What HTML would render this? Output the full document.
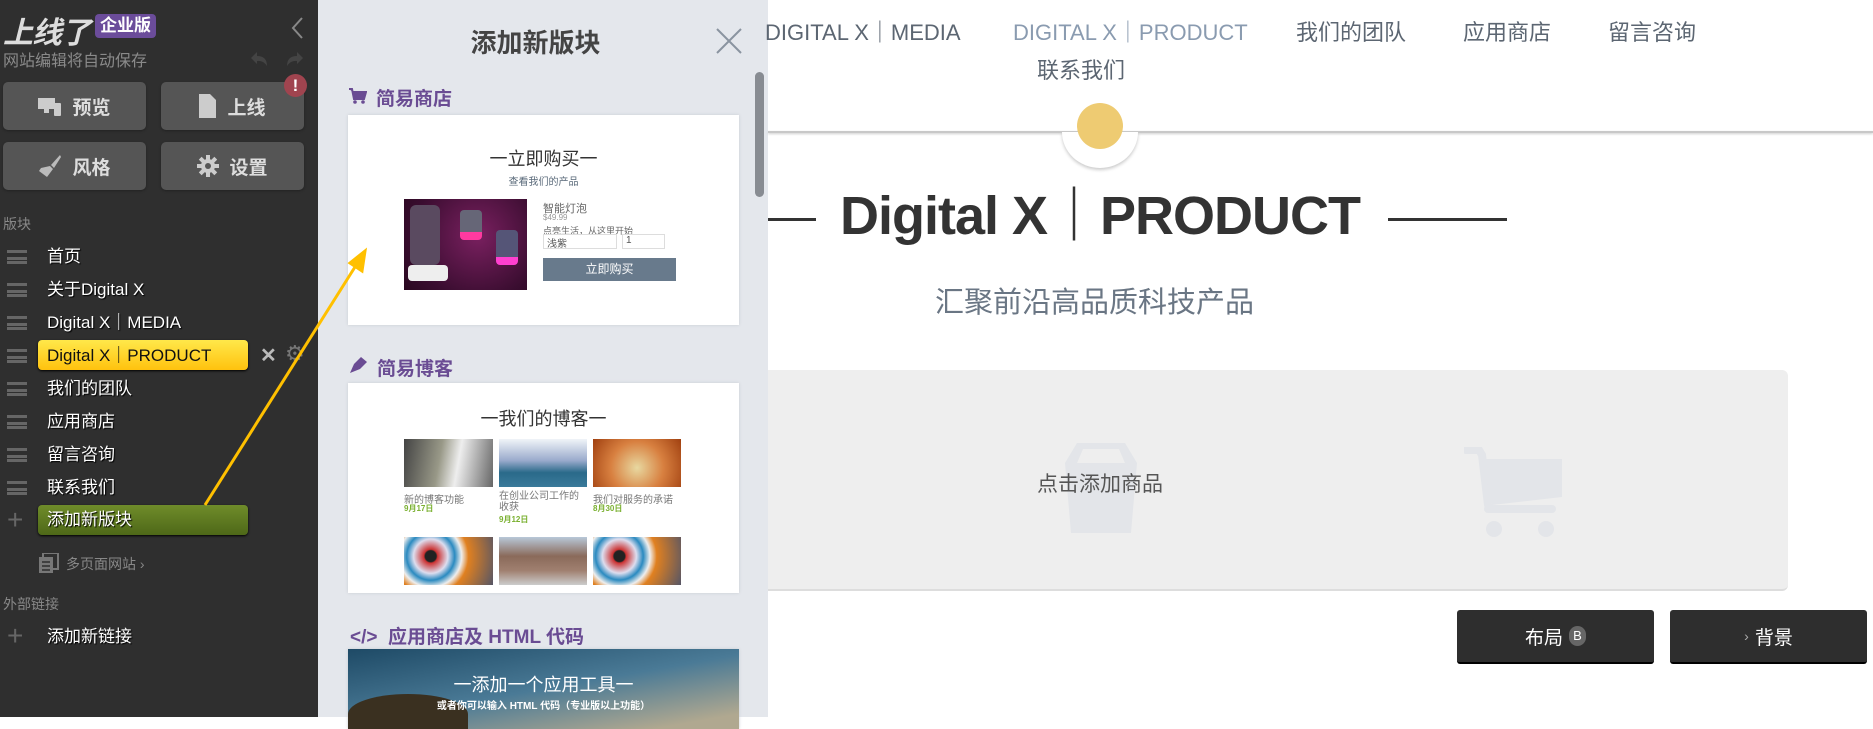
<!DOCTYPE html>
<html><head><meta charset="utf-8">
<style>
*{box-sizing:border-box;margin:0;padding:0}
body{width:1873px;height:717px;overflow:hidden;position:relative;background:#fff;font-family:"Liberation Sans","Noto Sans CJK SC",sans-serif}
.abs{position:absolute}
#side{left:0;top:0;width:318px;height:717px;background:#2f2f2f}
.btn{position:absolute;width:143px;height:48px;background:#555;border-radius:5px;color:#ddd;font-weight:bold;font-size:19px;display:flex;align-items:center;justify-content:center;gap:10px;box-shadow:0 1px 2px #222}
.item{position:absolute;left:47px;color:#fff;font-size:17px;text-shadow:1px 1px 1px #000;line-height:20px}
.ham{position:absolute;left:7px;width:20px;height:14px;border-top:3px solid #666;border-bottom:3px solid #666}
.ham:after{content:"";position:absolute;left:0;right:0;top:3.5px;height:3px;background:#666}
#panel{left:318px;top:0;width:450px;height:717px;background:#e4e7ec}
.card{position:absolute;left:348px;width:391px;background:#fff;box-shadow:0 0 3px #c8ccd2;overflow:hidden}
.h{position:absolute;left:349px;color:#6a4c93;font-weight:bold;font-size:19px}
.nav{position:absolute;top:15px;font-size:22px;color:#5c6672;white-space:nowrap}
</style></head><body>
<div id="side" class="abs">
  <div class="abs" style="left:3px;top:8px;font-size:30px;font-weight:bold;font-style:italic;color:#ddd;letter-spacing:-1px">上线了</div>
  <div class="abs" style="left:95px;top:14px;width:61px;height:24px;background:#6b4c9a;border-radius:4px;color:#fff;font-weight:bold;font-size:17px;text-align:center;line-height:24px">企业版</div>
  <svg class="abs" style="left:290px;top:16px" width="14" height="24"><path d="M12 2 L3 12 L12 22" stroke="#888" stroke-width="2" fill="none"/></svg>
  <div class="abs" style="left:3px;top:47px;font-size:16px;color:#8a8a8a">网站编辑将自动保存</div>
  <svg class="abs" style="left:247px;top:50px" width="60" height="18"><path d="M4 8 L10 2 L10 6 Q20 6 20 16 Q16 10 10 11 L10 14Z" fill="#444"/><path d="M56 8 L50 2 L50 6 Q40 6 40 16 Q44 10 50 11 L50 14Z" fill="#444"/></svg>
  <div class="btn" style="left:3px;top:82px"><svg width="24" height="20"><rect x="0" y="2" width="17" height="11" fill="#ccc"/><rect x="6" y="13" width="5" height="4" fill="#ccc"/><rect x="16" y="7" width="7" height="13" rx="1" fill="#ccc"/></svg>预览</div>
  <div class="btn" style="left:161px;top:82px"><svg width="18" height="24"><path d="M0 0 H11 L17 6 V24 H0Z" fill="#ccc"/></svg>上线</div>
  <div class="abs" style="left:284px;top:74px;width:23px;height:23px;border-radius:50%;background:#a0444f;color:#fff;font-weight:bold;font-size:17px;text-align:center;line-height:23px">!</div>
  <div class="btn" style="left:3px;top:142px"><svg width="24" height="24"><path d="M22 1 L13 11 L16 14 L23 3Z" fill="#bbb"/><path d="M12 12 L15 15 L9 23 L1 17 L3 14 Z" fill="#bbb"/></svg>风格</div>
  <div class="btn" style="left:161px;top:142px"><svg width="22" height="22" viewBox="0 0 22 22"><g fill="#ccc"><circle cx="11" cy="11" r="7"/><rect x="9" y="0" width="4" height="22"/><rect x="0" y="9" width="22" height="4"/><rect x="9" y="0" width="4" height="22" transform="rotate(45 11 11)"/><rect x="9" y="0" width="4" height="22" transform="rotate(-45 11 11)"/></g><circle cx="11" cy="11" r="3" fill="#555"/></svg>设置</div>
  <div class="abs" style="left:3px;top:214px;font-size:14px;color:#888">版块</div>
  <div class="ham" style="top:250px"></div><div class="item" style="top:247px">首页</div>
  <div class="ham" style="top:283px"></div><div class="item" style="top:280px">关于Digital X</div>
  <div class="ham" style="top:316px"></div><div class="item" style="top:313px">Digital X｜MEDIA</div>
  <div class="ham" style="top:349px"></div>
  <div class="abs" style="left:38px;top:340px;width:210px;height:30px;border-radius:4px;background:linear-gradient(#ffe84a,#ffc20e);box-shadow:0 1px 2px #000"></div>
  <div class="item" style="top:346px;color:#111;text-shadow:none">Digital X｜PRODUCT</div>
  <div class="abs" style="left:260px;top:343px;color:#bbb;font-size:20px;font-weight:bold">✕</div>
  <div class="abs" style="left:285px;top:341px;color:#777;font-size:22px">⚙</div>
  <div class="ham" style="top:382px"></div><div class="item" style="top:379px">我们的团队</div>
  <div class="ham" style="top:415px"></div><div class="item" style="top:412px">应用商店</div>
  <div class="ham" style="top:448px"></div><div class="item" style="top:445px">留言咨询</div>
  <div class="ham" style="top:481px"></div><div class="item" style="top:478px">联系我们</div>
  <div class="abs" style="left:7px;top:510px;color:#666;font-size:28px;line-height:20px">+</div>
  <div class="abs" style="left:38px;top:505px;width:210px;height:30px;border-radius:4px;background:linear-gradient(#6f8c2a,#4e6818);box-shadow:0 1px 2px #000"></div>
  <div class="item" style="top:510px">添加新版块</div>
  <svg class="abs" style="left:39px;top:553px" width="20" height="20"><rect x="4" y="0" width="15" height="16" fill="none" stroke="#777" stroke-width="2"/><rect x="0" y="4" width="14" height="16" fill="#777"/><path d="M3 9h8M3 13h8M3 17h8" stroke="#2f2f2f" stroke-width="1.5"/></svg>
  <div class="abs" style="left:66px;top:554px;font-size:14px;color:#888">多页面网站 ›</div>
  <div class="abs" style="left:3px;top:594px;font-size:14px;color:#888">外部链接</div>
  <div class="abs" style="left:7px;top:626px;color:#666;font-size:28px;line-height:20px">+</div>
  <div class="item" style="top:627px">添加新链接</div>
</div>

<div id="panel" class="abs">
  <div class="abs" style="left:0;width:435px;top:23px;text-align:center;font-size:26px;font-weight:bold;color:#444">添加新版块</div>
  <svg class="abs" style="left:398px;top:28px" width="26" height="26"><path d="M1 1L25 25M25 1L1 25" stroke="#8a94a0" stroke-width="2"/></svg>
  <div class="abs" style="left:437px;top:72px;width:9px;height:125px;border-radius:5px;background:#888c92"></div>
</div>
<svg class="abs" style="left:349px;top:88px" width="18" height="16"><path d="M0 1H3L5 11H15L17 4H4" fill="#6a4c93" stroke="#6a4c93" stroke-width="2"/><circle cx="6" cy="14" r="1.8" fill="#6a4c93"/><circle cx="14" cy="14" r="1.8" fill="#6a4c93"/></svg>
<div class="h" style="left:376px;top:84px">简易商店</div>
<div class="card" style="top:115px;height:210px">
  <div class="abs" style="left:0;width:391px;top:30px;text-align:center;font-size:18px;color:#333">一立即购买一</div>
  <div class="abs" style="left:0;width:391px;top:58px;text-align:center;font-size:10px;color:#5a6a7a">查看我们的产品</div>
  <div class="abs" style="left:56px;top:84px;width:123px;height:91px;background:radial-gradient(circle at 60% 40%,#7a2060,#3a0d30 70%,#2a0820)"></div>
  <div class="abs" style="left:62px;top:90px;width:30px;height:60px;background:#5a4a60;border-radius:6px"></div>
  <div class="abs" style="left:60px;top:150px;width:40px;height:16px;background:#eee;border-radius:4px"></div>
  <div class="abs" style="left:112px;top:95px;width:22px;height:30px;background:#667;border-radius:4px;border-bottom:8px solid #ff3aa0"></div>
  <div class="abs" style="left:148px;top:115px;width:22px;height:35px;background:#557;border-radius:4px;border-bottom:8px solid #ff40d0"></div>
  <div class="abs" style="left:195px;top:85px;font-size:11px;color:#666">智能灯泡</div>
  <div class="abs" style="left:195px;top:98px;font-size:8px;color:#999">$49.99</div>
  <div class="abs" style="left:195px;top:109px;font-size:9px;color:#666">点亮生活，从这里开始</div>
  <div class="abs" style="left:195px;top:119px;width:74px;height:15px;border:1px solid #ddd;font-size:10px;color:#555;padding-left:3px">浅紫</div>
  <div class="abs" style="left:274px;top:119px;width:43px;height:15px;border:1px solid #ddd;font-size:10px;color:#555;padding-left:3px">1</div>
  <div class="abs" style="left:195px;top:143px;width:133px;height:23px;background:#687a8c;color:#fff;font-size:12px;text-align:center;line-height:23px">立即购买</div>
</div>
<svg class="abs" style="left:348px;top:356px" width="20" height="18"><path d="M2 17 L6 8 L13 1 L19 6 L12 13Z" fill="#6a4c93"/></svg>
<div class="h" style="left:377px;top:354px">简易博客</div>
<div class="card" style="top:383px;height:210px">
  <div class="abs" style="left:0;width:391px;top:22px;text-align:center;font-size:18px;color:#333">一我们的博客一</div>
  <div class="abs" style="left:56px;top:56px;width:89px;height:48px;background:linear-gradient(100deg,#444,#998 40%,#eee 60%,#666)"></div>
  <div class="abs" style="left:151px;top:56px;width:88px;height:48px;background:linear-gradient(#f0f4f8,#9ac 45%,#2a6a8a 70%,#3a7a9a)"></div>
  <div class="abs" style="left:245px;top:56px;width:88px;height:48px;background:radial-gradient(circle at 50% 60%,#e8d8a0,#d88040 50%,#a04010)"></div>
  <div class="abs" style="left:56px;top:108px;font-size:10px;color:#777">新的博客功能</div>
  <div class="abs" style="left:56px;top:120px;font-size:8px;color:#7ab030;font-weight:bold">9月17日</div>
  <div class="abs" style="left:151px;top:108px;font-size:10px;color:#777;width:88px;line-height:11px">在创业公司工作的收获</div>
  <div class="abs" style="left:151px;top:131px;font-size:8px;color:#7ab030;font-weight:bold">9月12日</div>
  <div class="abs" style="left:245px;top:108px;font-size:10px;color:#777">我们对服务的承诺</div>
  <div class="abs" style="left:245px;top:120px;font-size:8px;color:#7ab030;font-weight:bold">8月30日</div>
  <div class="abs" style="left:56px;top:154px;width:89px;height:48px;background:radial-gradient(circle at 30% 40%,#222 8%,#c33 10%,#dde 25%,#2a8ac0 35%,#eee 45%,#e08020 55%,#556)"></div>
  <div class="abs" style="left:151px;top:154px;width:88px;height:48px;background:linear-gradient(#b8c8d8,#8a6a5a 40%,#a08070 70%,#ccc)"></div>
  <div class="abs" style="left:245px;top:154px;width:88px;height:48px;background:radial-gradient(circle at 30% 40%,#222 8%,#c33 10%,#dde 25%,#2a8ac0 35%,#eee 45%,#e08020 55%,#556)"></div>
</div>
<div class="h" style="left:350px;top:622px">&lt;/&gt;&nbsp; 应用商店及 HTML 代码</div>
<div class="card" style="top:649px;height:80px;background:linear-gradient(170deg,#1e4a66,#4a7a96 50%,#b0a890 90%)">
  <div class="abs" style="left:0;top:45px;width:120px;height:40px;background:#3a3020;border-radius:60% 60% 0 0"></div>
  <div class="abs" style="left:0;width:391px;top:22px;text-align:center;font-size:18px;color:#fff">一添加一个应用工具一</div>
  <div class="abs" style="left:0;width:391px;top:48px;text-align:center;font-size:10px;color:#fff;font-weight:bold">或者你可以输入 HTML 代码（专业版以上功能）</div>
</div>
<svg class="abs" style="left:200px;top:245px" width="175" height="265"><path d="M5 260 L160 14" stroke="#ffc000" stroke-width="3"/><path d="M165 6 L150 18 L162 26Z" fill="#ffc000" stroke="#ffc000" stroke-width="3"/></svg>

<div class="nav" style="left:765px">DIGITAL X｜MEDIA</div>
<div class="nav" style="left:1013px;color:#8a9bb0">DIGITAL X｜PRODUCT</div>
<div class="nav" style="left:1296px">我们的团队</div>
<div class="nav" style="left:1463px">应用商店</div>
<div class="nav" style="left:1608px">留言咨询</div>
<div class="nav" style="left:1037px;top:53px">联系我们</div>
<div class="abs" style="left:768px;top:131px;width:1105px;height:2px;background:#c8c8c8;box-shadow:0 1px 2px #ccc"></div>
<div class="abs" style="left:1062px;top:96px;width:76px;height:72px;border-radius:50%;background:#fff;box-shadow:0 2px 3px #ccc;clip-path:inset(36px -5px -5px -5px)"></div>
<div class="abs" style="left:1077px;top:103px;width:46px;height:46px;border-radius:50%;background:#eecb72"></div>
<div class="abs" style="left:768px;top:218px;width:48px;height:3px;background:#333"></div>
<div class="abs" style="left:1388px;top:218px;width:119px;height:3px;background:#333"></div>
<div class="abs" style="left:820px;top:183px;width:560px;text-align:center;font-size:54px;font-weight:bold;color:#333;letter-spacing:-1px;line-height:66px;white-space:nowrap">Digital X｜PRODUCT</div>
<div class="abs" style="left:935px;top:279px;font-size:29px;color:#6a7684;white-space:nowrap">汇聚前沿高品质科技产品</div>
<div class="abs" style="left:768px;top:370px;width:1020px;height:221px;background:#eeeeee;border-radius:0 6px 6px 0;border-bottom:2px solid #ddd"></div>
<svg class="abs" style="left:1055px;top:443px" width="92" height="90"><path d="M10 20 L22 0 H70 L82 20 L76 90 H16Z" fill="#e3e5e9"/><path d="M22 20 L28 6 H64 L70 20" fill="#eee"/></svg>
<svg class="abs" style="left:1464px;top:447px" width="100" height="95"><path d="M2 3 H15 L18 8 L24 58" stroke="#e3e5e9" stroke-width="8" fill="none" stroke-linecap="round"/><path d="M18 12 H98 V50 L28 58Z" fill="#e3e5e9"/><path d="M24 62 H88" stroke="#e3e5e9" stroke-width="8" stroke-linecap="round"/><circle cx="30" cy="82" r="8" fill="#e3e5e9"/><circle cx="82" cy="82" r="8" fill="#e3e5e9"/></svg>
<div class="abs" style="left:1035px;top:468px;width:130px;text-align:center;font-size:21px;color:#555">点击添加商品</div>
<div class="abs" style="left:1457px;top:610px;width:197px;height:54px;background:#2e2e2e;border-radius:3px;border-bottom:2px solid #000;color:#fff;font-size:19px;display:flex;align-items:center;justify-content:center;gap:6px">布局 <span style="display:inline-block;width:17px;height:20px;border-radius:9px;background:#666;font-size:13px;text-align:center;line-height:20px">B</span></div>
<div class="abs" style="left:1670px;top:610px;width:197px;height:54px;background:#2e2e2e;border-radius:3px;border-bottom:2px solid #000;color:#fff;font-size:19px;display:flex;align-items:center;justify-content:center"><span style="color:#aaa;font-size:14px;margin-right:6px">›</span>背景</div>
</body></html>
